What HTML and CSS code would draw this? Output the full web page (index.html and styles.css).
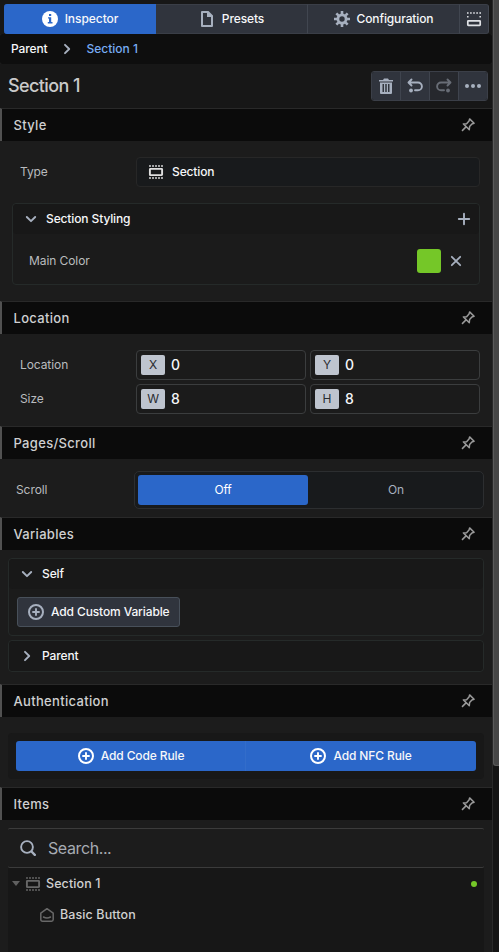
FILE: index.html
```html
<!DOCTYPE html>
<html lang="en">
<head>
<meta charset="utf-8">
<title>Inspector</title>
<link rel="stylesheet" href="styles.css">
</head>
<body>
<svg class="defs" width="0" height="0">
  <symbol id="pin" viewBox="0 0 16 16"><path d="M9.600 1.900l4.500 4.400-2.200.7-2.300 2.500-.3 3.200L3.400 6.900l3.200-.2L9 4.100zM6 9.900l-4 4" fill="none" stroke="currentColor" stroke-width="1.500" stroke-linejoin="round"/></symbol>
  <symbol id="down" viewBox="0 0 16 16"><path d="M3.800 6L8 10.200 12.200 6" fill="none" stroke="currentColor" stroke-width="1.900" stroke-linecap="round" stroke-linejoin="round"/></symbol>
  <symbol id="right" viewBox="0 0 16 16"><path d="M6 3.800L10.200 8 6 12.200" fill="none" stroke="currentColor" stroke-width="1.900" stroke-linecap="round" stroke-linejoin="round"/></symbol>
  <symbol id="add" viewBox="0 0 16 16"><circle cx="8" cy="8" r="7" fill="none" stroke="currentColor" stroke-width="2"/><path d="M8 5v6M5 8h6" stroke="currentColor" stroke-width="1.900" stroke-linecap="round"/></symbol>
  <symbol id="section" viewBox="0 0 16 16"><path d="M1 2h14M1 14h14" stroke="currentColor" stroke-width="2" stroke-dasharray="2 1" opacity=".7"/><rect x="1.900" y="4.900" width="12.200" height="6.200" rx=".5" fill="none" stroke="currentColor" stroke-width="1.900"/></symbol>
</svg>
<div class="panel">
  <nav class="tabs">
    <div class="tab active"><svg class="icon" viewBox="0 0 16 16"><circle cx="8" cy="8" r="8" fill="#fff"/><path d="M7 3h2.200v2H7zM6 6.300h3.200V11H10.500v1.500H5.800V11H7V7.500H6z" fill="#2b67c9"/></svg><span>Inspector</span></div>
    <div class="tab"><svg class="icon" viewBox="0 0 16 16"><path fill-rule="evenodd" d="M3 0h6.500L14 4.500V15a1 1 0 0 1-1 1H3a1 1 0 0 1-1-1V1a1 1 0 0 1 1-1zm1 2v12h8V6H8V2z" fill="#a7b0bf"/></svg><span>Presets</span></div>
    <div class="tab"><svg class="icon" viewBox="0 0 16 16"><g stroke="#a7b0bf"><circle cx="8" cy="8" r="4.100" fill="none" stroke-width="2.800"/><path d="M8 0v3M8 13v3M0 8h3M13 8h3M2.350 2.350l2 2M11.650 11.650l2 2M2.350 13.650l2-2M11.650 4.350l2-2" stroke-width="2.600"/></g></svg><span>Configuration</span></div>
    <div class="tab"><svg class="icon light" viewBox="0 0 16 16"><path d="M1 2h14" stroke="currentColor" stroke-width="1.600" stroke-dasharray="1.600 1.500"/><path d="M1.800 5v1.500M14.200 5v1.500" stroke="currentColor" stroke-width="1.500"/><rect x="1.800" y="9.800" width="12.400" height="4.500" rx=".5" fill="none" stroke="currentColor" stroke-width="1.700"/></svg></div>
  </nav>
  <div class="crumbs"><span>Parent</span><svg class="icon"><use href="#right"/></svg><span class="current">Section 1</span></div>
  <div class="title-row">
    <h1>Section 1</h1>
    <div class="tools">
      <button><svg class="icon" viewBox="0 0 16 16"><path d="M1 2h4l1-1.500h4L11 2h4v1.500H1z" fill="currentColor"/><path fill-rule="evenodd" d="M2 4.500h12V15q0 1-1 1H3q-1 0-1-1zM4.500 6v8H6V6zM7.250 6v8h1.500V6zM10 6v8h1.500V6z" fill="currentColor"/></svg></button>
      <button><svg class="icon" viewBox="0 0 16 16"><path d="M4.500 1.500l-3 3 3 3M2 4.500h9a3.900 3.900 0 0 1 0 7.800H8" fill="none" stroke="currentColor" stroke-width="1.900" stroke-linecap="round" stroke-linejoin="round"/><circle cx="4" cy="12.500" r="1.900" fill="currentColor"/></svg></button>
      <button class="disabled"><svg class="icon" viewBox="0 0 16 16"><path d="M11.500 1.500l3 3-3 3M14 4.500H5a3.900 3.900 0 0 0 0 7.800h3" fill="none" stroke="currentColor" stroke-width="1.900" stroke-linecap="round" stroke-linejoin="round"/><circle cx="12" cy="12.500" r="1.900" fill="currentColor"/></svg></button>
      <button><svg class="icon" viewBox="0 0 16 16"><g fill="currentColor"><circle cx="2" cy="8" r="2"/><circle cx="8" cy="8" r="2"/><circle cx="14" cy="8" r="2"/></g></svg></button>
    </div>
  </div>

  <section class="style">
    <h2><span>Style</span><svg class="pin"><use href="#pin"/></svg></h2>
    <div class="row"><label>Type</label><div class="type"><svg class="icon"><use href="#section"/></svg><span>Section</span></div></div>
    <div class="card styling">
      <div class="card-head"><svg class="icon"><use href="#down"/></svg><span>Section Styling</span><svg class="icon plus" viewBox="0 0 16 16"><path d="M8 2.800v10.400M2.800 8h10.400" stroke="currentColor" stroke-width="1.900" stroke-linecap="round"/></svg></div>
      <div class="color-row"><label>Main Color</label><i class="swatch"></i><svg class="icon" viewBox="0 0 16 16"><path d="M3.800 3.800l8.400 8.400M12.200 3.800l-8.400 8.400" stroke="currentColor" stroke-width="1.800" stroke-linecap="round"/></svg></div>
    </div>
  </section>

  <section class="location">
    <h2><span>Location</span><svg class="pin"><use href="#pin"/></svg></h2>
    <div class="row"><label>Location</label><div class="field"><b>X</b><span>0</span></div><div class="field"><b>Y</b><span>0</span></div></div>
    <div class="row"><label>Size</label><div class="field"><b>W</b><span>8</span></div><div class="field"><b>H</b><span>8</span></div></div>
  </section>

  <section class="scroll">
    <h2><span>Pages/Scroll</span><svg class="pin"><use href="#pin"/></svg></h2>
    <div class="scroll-row"><label>Scroll</label><div class="segmented"><div class="on">Off</div><div>On</div></div></div>
  </section>

  <section class="variables">
    <h2><span>Variables</span><svg class="pin"><use href="#pin"/></svg></h2>
    <div class="card self">
      <div class="card-head"><svg class="icon"><use href="#down"/></svg><span>Self</span></div>
      <div class="add-variable"><svg class="icon"><use href="#add"/></svg><span>Add Custom Variable</span></div>
    </div>
    <div class="card parent"><div class="card-head"><svg class="icon"><use href="#right"/></svg><span>Parent</span></div></div>
  </section>

  <section class="auth">
    <h2><span>Authentication</span><svg class="pin"><use href="#pin"/></svg></h2>
    <div class="rules">
      <div class="rule"><svg class="icon"><use href="#add"/></svg><span>Add Code Rule</span></div>
      <div class="rule"><svg class="icon"><use href="#add"/></svg><span>Add NFC Rule</span></div>
    </div>
  </section>

  <section class="items">
    <h2><span>Items</span><svg class="pin"><use href="#pin"/></svg></h2>
    <div class="search"><svg class="icon" viewBox="0 0 16 16"><circle cx="7" cy="7" r="5.900" fill="none" stroke="currentColor" stroke-width="1.900"/><path d="M11.500 11.500l3.300 3.300" stroke="currentColor" stroke-width="2.400" stroke-linecap="round"/></svg><span>Search...</span></div>
    <div class="tree">
      <div class="node"><i class="caret"></i><svg class="icon dim"><use href="#section"/></svg><span>Section 1</span><i class="dot"></i></div>
      <div class="node child"><svg class="icon dim" viewBox="0 0 16 16"><path d="M1.800 6.200L8 1.700l6.200 4.500v6.300q0 1.700-1.700 1.700h-9q-1.700 0-1.700-1.700z" fill="none" stroke="currentColor" stroke-width="1.500" stroke-linejoin="round"/><path d="M4.500 10q3.500 2 7 0" fill="none" stroke="currentColor" stroke-width="1.500" stroke-linecap="round"/></svg><span>Basic Button</span></div>
    </div>
  </section>
</div>
<div class="scrollbar"><div class="thumb"></div></div>
</body>
</html>
```
FILE: styles.css
```css
* { box-sizing: border-box; }
body {
  margin: 0; width: 499px; height: 952px; overflow: hidden;
  display: flex; background: #1c1c1c; color: #f6f7f9;
  font: 500 12px/16px Inter, "Liberation Sans", sans-serif;
  letter-spacing: -.12px;
}
.defs { position: absolute; }
.panel { width: 492px; height: 952px; display: flex; flex-direction: column; overflow: hidden; }
.icon { width: 16px; height: 16px; flex: none; color: #a7b0bf; }
.light { color: #e0e2e6; }
label { font-weight: 400; color: #b9bbbe; letter-spacing: -.08px; }

.tabs { display: grid; grid-template-columns: 152px 152px 152px 29px; height: 34px; padding: 4px 3px 0 4px; background: #171717; }
.tab { display: flex; align-items: center; justify-content: center; gap: 7px; background: #30343d; border: 1px solid #3a3e47; border-left-width: 0; }
.tab + .tab { border-right-color: #414650; }
.tab.active { background: #2b67c9; border-color: #2b67c9; border-radius: 3px 0 0 3px; }
.tab:last-child { border-radius: 0 3px 3px 0; }
.tab.active { padding-left: 1px; letter-spacing: -.05px; }

.crumbs { height: 30px; padding-left: 11px; display: flex; align-items: center; background: #0e0e0e; border-radius: 3px; }
.crumbs .icon { margin: 0 11.5px; }
.current { color: #78acf4; letter-spacing: 0; }

.title-row { height: 44px; padding: 0 4px 0 8px; display: flex; align-items: center; justify-content: space-between; background: #171717; }
h1 { margin: 0; font-size: 18px; font-weight: 500; line-height: 24px; color: #cacaca; letter-spacing: -.6px; }
.tools { display: flex; height: 30px; border: 1px solid #3b3f48; border-radius: 3px; overflow: hidden; }
.tools button { width: 29px; padding: 0; border: 0; border-right: 1px solid #3f444e; background: #30343d; display: flex; align-items: center; justify-content: center; }
.tools button:last-child { border-right: 0; width: 28px; }
.tools .disabled { background: #26282d; }
.disabled .icon { color: #686d76; }

h2 { margin: 0; height: 33px; display: flex; align-items: center; justify-content: space-between; padding: 0 16px 0 11.5px; border-top: 1px solid #292929; border-left: 2px solid #515151; background: #0b0b0b; font-size: 13px; font-weight: 500; letter-spacing: .32px; color: #cfd0d1; }
.pin { width: 16px; height: 16px; color: #9a9a9a; }
.style { height: 193px; }
.location { height: 125px; }
.scroll { height: 91px; }
.variables { height: 167px; }
.auth { height: 103px; }
.items { height: 165px; }

.row { display: grid; grid-template-columns: 116px 170px 170px; align-items: center; padding-left: 20px; height: 30px; }
.style .row { grid-template-columns: 116px 344px; margin-top: 16px; }
.type { height: 30px; padding-left: 11px; display: flex; align-items: center; gap: 8px; background: #181a1c; border: 1px solid #272727; border-radius: 4px; }
.type .icon { color: #dfdfdf; }

.card { border: 1px solid #252a29; border-radius: 4px; background: #1b1b1b; }
.card-head { height: 30px; padding-left: 10px; display: flex; align-items: center; background: #181818; border-radius: 4px; }
.card-head span { margin-left: 7px; }
.card-head .plus { margin-left: auto; margin-right: 7px; }
.styling { margin: 16px 12px 0; height: 82px; }
.color-row { height: 50px; margin-top: 2px; padding: 0 15px 0 16px; display: flex; align-items: center; }
.swatch { width: 24px; height: 24px; margin: 0 7px 0 auto; border-radius: 3px; background: #75c728; }

.location .field + .field { margin-left: 4px; width: 170px; }
.location h2 + .row { margin-top: 16px; }
.location .row + .row { margin-top: 4px; }
.field { display: flex; align-items: center; height: 30px; padding-left: 4px; border: 1px solid #3b3d3e; border-radius: 4px; background: #1b1b1b; font-size: 14px; }
.field b { width: 24px; height: 20px; margin-right: 6px; border-radius: 2px; background: #bec4ce; color: #292c31; text-align: center; font-size: 12px; font-weight: 400; line-height: 20px; }

.scroll-row { display: flex; align-items: center; justify-content: space-between; padding: 0 8px 0 16px; margin-top: 12px; }
.segmented { display: grid; grid-template-columns: 170px 1fr; column-gap: 3px; width: 350px; height: 38px; padding: 3px 2px 3px 3px; border: 1px solid #2c2e30; border-radius: 5px; background: #181a1c; font-weight: 400; text-align: center; line-height: 30px; color: #a7b0bf; }
.segmented .on { background: #2b67c9; color: #fff; border-radius: 3px; }

.self { height: 78px; margin: 8px 8px 4px; }
.self .add-variable { margin: 8px 0 0 8px; }
.add-variable { width: 163px; height: 30px; padding-left: 10px; display: flex; align-items: center; gap: 7px; background: #30343d; border: 1px solid #48505a; border-radius: 3px; }
.parent { height: 32px; margin: 0 8px; }

.rules { display: grid; grid-template-columns: 1fr 1fr; height: 46px; margin: 16px 8px 0; padding: 8px; background: #181818; border-radius: 4px; }
.rule { display: flex; align-items: center; justify-content: center; gap: 7px; background: #2b67c9; border-radius: 0 3px 3px 0; }
.rule:first-child { padding-left: 1px; border-radius: 3px 0 0 3px; border-right: 1px solid #336dca; }
.rule .icon { color: #fff; }

.search { height: 40px; margin: 8px 8px 0; padding-left: 12px; display: flex; align-items: center; gap: 12px; border: solid #3b3b3b; border-width: 1px 0; border-radius: 2px; font-size: 16px; font-weight: 400; color: #a7abb3; letter-spacing: -.4px; }
.tree { height: 84px; margin: 0 8px; background: #171717; color: #d0d0d0; font-size: 12.5px; letter-spacing: .1px; }
.node { height: 31px; display: flex; align-items: center; padding: 0 7px 0 4px; }
.node .icon { margin: 0 5px; }
.node .dim { color: #686868; }
.child { padding-left: 26px; }
.caret { border: solid transparent; border-width: 5px 4px 0; border-top-color: #606060; }
.dot { width: 6px; height: 6px; margin-left: auto; border-radius: 50%; background: #75c728; }

.scrollbar { width: 7px; height: 952px; background: #141414; border-left: 1px solid #292929; }
.thumb { width: 6px; height: 766px; background: #464646; border: 1px solid #5a5a5a; border-width: 0 0 1px 1px; border-radius: 0 0 0 3px; }
```
